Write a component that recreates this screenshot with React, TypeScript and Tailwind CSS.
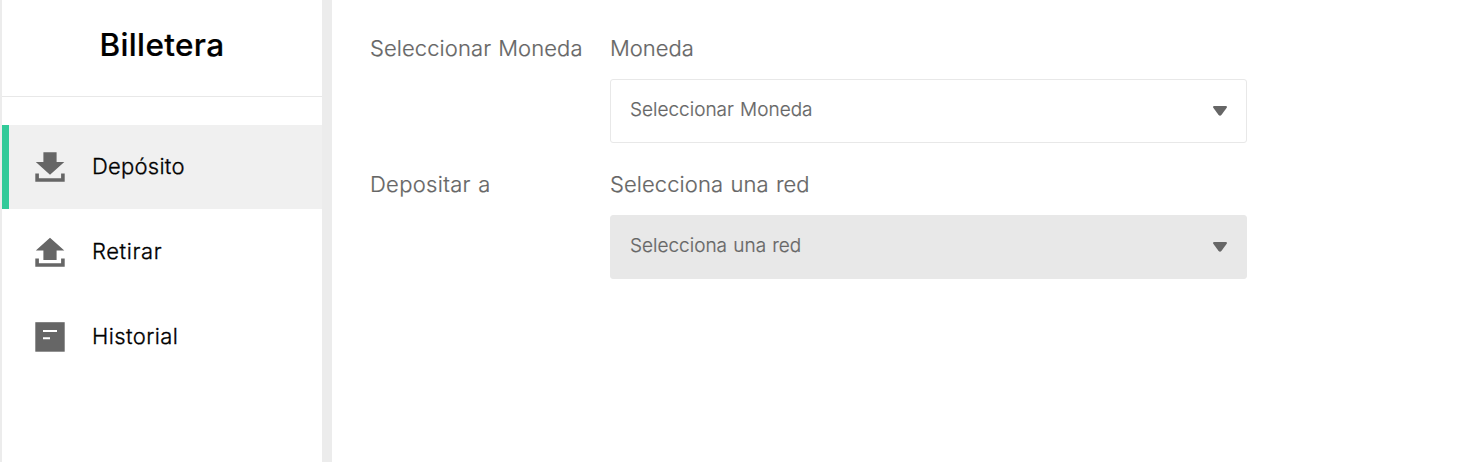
import type { ReactNode } from "react";

const TRAY = "M.3 21.4h3.6v4.8h22.2v-4.8h3.6v8.4H.3z";

function DepositIcon() {
  return (
    <svg viewBox="0 0 30 30" className="h-[30px] w-[30px] shrink-0" fill="#666">
      <path d="M8.4 0.3h13.2v9.8h7.7L15 22.8.8 10.1h7.6z" />
      <path d={TRAY} />
    </svg>
  );
}

function WithdrawIcon() {
  return (
    <svg viewBox="0 0 30 30" className="h-[30px] w-[30px] shrink-0" fill="#666">
      <path d="M15 .8 29.3 13.4h-7.7V23H8.4v-9.6H.8z" />
      <path d={TRAY} />
    </svg>
  );
}

function HistoryIcon() {
  return (
    <svg viewBox="0 0 30 30" className="h-[30px] w-[30px] shrink-0">
      <rect x=".3" y=".2" width="29.4" height="29.5" fill="#666" />
      <path d="M8 7.9h14v2H8zM8 15.2h7v2H8z" fill="#fff" />
    </svg>
  );
}

function NavItem({ icon, active, tracking, children }: { icon: ReactNode; active?: boolean; tracking: string; children: ReactNode }) {
  return (
    <a
      className={
        "flex h-[84px] items-center border-l-[7px] pl-[26px] text-[22px] text-black " +
        (active ? "border-[#32ca99] bg-[#f0f0f0]" : "border-transparent")
      }
    >
      {icon}
      <span className={"ml-[27px] pb-[2px] [-webkit-text-stroke:0.3px_#000] " + tracking}>{children}</span>
    </a>
  );
}

type FieldProps = { label: ReactNode; title: ReactNode; value: ReactNode; disabled?: boolean };

function SelectField({ label, title, value, disabled }: FieldProps) {
  return (
    <div className="flex text-[22px] leading-[30px] text-[#666] [-webkit-text-stroke:0.2px_#666]">
      <div className={"w-[240px] shrink-0 " + (disabled ? "tracking-[0.3px] [word-spacing:1px]" : "tracking-[0.08px] [word-spacing:0.8px]")}>
        {label}
      </div>
      <div className="w-[637px]">
        <div className={disabled ? "tracking-[0.08px] [word-spacing:1px]" : ""}>{title}</div>
        <button
          disabled={disabled}
          className={
            "mt-4 flex h-16 w-full items-center justify-between rounded-[3px] border border-[#e8e8e8] px-[19px] text-[19px] [word-spacing:0.9px] " +
            (disabled ? "bg-[#e8e8e8]" : "bg-white")
          }
        >
          <span className="-mt-[3px]">{value}</span>
          <svg viewBox="0 0 14 10" className="h-[10px] w-[14px]" fill="#666">
            <path d="M1 0h12q1.4.3.7 1.7L8.4 9Q7 10.5 5.6 9L.3 1.7Q-.4.3 1 0z" />
          </svg>
        </button>
      </div>
    </div>
  );
}

export default function App() {
  return (
    <div className="flex h-screen overflow-hidden bg-white font-['Inter',sans-serif] font-light">
      <aside className="w-[332px] shrink-0 border-r-[10px] border-l-2 border-[#ececec]">
        <h1 className="flex h-[97px] items-center justify-center border-b border-[#e8e8e8] pb-[6px] text-[31.5px] font-medium tracking-[0.35px] text-black [-webkit-text-stroke:0.2px_#000]">
          <span>Billetera</span>
        </h1>
        <nav className="mt-7 flex flex-col gap-px">
          <NavItem active icon={<DepositIcon />} tracking="tracking-[0.25px]">Depósito</NavItem>
          <NavItem icon={<WithdrawIcon />} tracking="tracking-[0.6px]">Retirar</NavItem>
          <NavItem icon={<HistoryIcon />} tracking="tracking-[0.4px]">Historial</NavItem>
        </nav>
      </aside>
      <main className="flex flex-col gap-[26px] pt-[33px] pl-[38px]">
        <SelectField label="Seleccionar Moneda" title="Moneda" value="Seleccionar Moneda" />
        <SelectField disabled label="Depositar a" title="Selecciona una red" value="Selecciona una red" />
      </main>
    </div>
  );
}
